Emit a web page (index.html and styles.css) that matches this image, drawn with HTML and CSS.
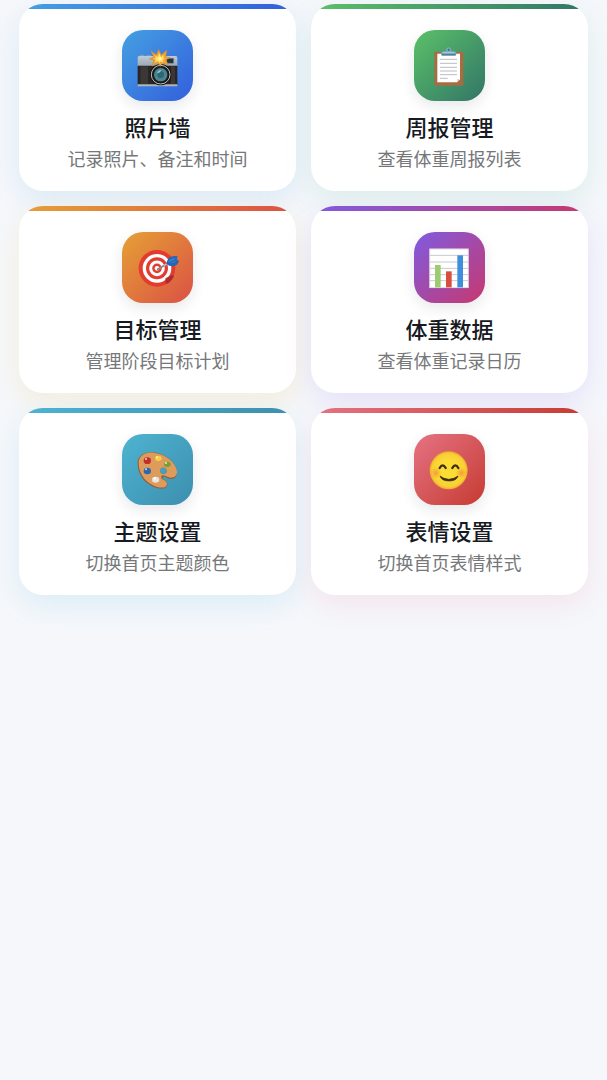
FILE: index.html
```html
<!DOCTYPE html>
<html lang="zh-CN">
<head>
<meta charset="utf-8">
<meta name="viewport" content="width=device-width, initial-scale=1">
<title>功能菜单</title>
<link rel="stylesheet" href="styles.css">
</head>
<body>
<main class="menu">
  <a class="card blue" href="#photos">
    <span class="icon"><svg class="glyph" viewBox="0 0 135 135" aria-hidden="true">
      <defs><linearGradient id="silver" x1="0" y1="0" x2="0" y2="1"><stop offset="0" stop-color="#bccbd6"/><stop offset="1" stop-color="#9aa9b3"/></linearGradient></defs>
      <path d="M14 39V35h14v4zM34 40V36h14v4z" fill="#6f9fc8"/>
      <path d="M12 39h110q5 0 5 5v25H8V44q0-5 4-5z" fill="url(#silver)"/>
      <path d="M8 68h119v58H8z" fill="#292626"/>
      <path d="M16 70h23v54H16zM108 70h12v54h-12z" fill="#3b3736"/>
      <path d="M8 124h119v6H8z" fill="#b0b6ba"/>
      <rect x="95" y="46" width="21" height="15" rx="2" fill="#26313a" stroke="#788791" stroke-width="2"/>
      <circle cx="77" cy="95" r="32" fill="#171616"/>
      <circle cx="77" cy="95" r="28" fill="none" stroke="#c9c0b4" stroke-width="3"/>
      <circle cx="77" cy="95" r="23" fill="#17272d"/>
      <circle cx="77" cy="95" r="20" fill="#4a8590"/>
      <circle cx="77" cy="95" r="10" fill="#2d6675"/>
      <path d="M66 91q3-10 13-10-3 9-13 10z" fill="#91c5ca"/>
      <path d="M71 20l8 16 16-14-3 19 13 3-13 6 7 15-17-6-6 11-8-12-17 11 6-18-14-3 14-6-9-18 16 12z" fill="#f2a534" stroke="#d08a32" stroke-width="2"/>
      <path d="M73 31l5 11 9-6-2 10 5 2-7 3 2 8-8-4-4 6-4-7-9 5 3-9-7-2 7-3-4-8 9 5z" fill="#ffdf65"/>
      <circle cx="75" cy="47" r="5" fill="#fff5b7"/>
    </svg></span>
    <h2 class="title">照片墙</h2>
    <p class="desc">记录照片、备注和时间</p>
  </a>
  <a class="card green" href="#reports">
    <span class="icon"><svg class="glyph" viewBox="0 0 135 135" aria-hidden="true">
      <rect x="22" y="26" width="87" height="102" rx="4" fill="#a96c40"/>
      <path d="M31 32h68v77l-9 9H31z" fill="#fff"/>
      <path d="M99 109H90v9z" fill="#cbd1da"/>
      <path d="M39 49h51M39 61h51M39 73h51M39 84h51M39 95h51M39 106h23" stroke="#969ba3" stroke-width="2"/>
      <path d="M42 34v-4q0-5 7-5h7q2-12 9-12t9 12h7q7 0 7 5v4q0 4-4 4H46q-4 0-4-4z" fill="#79a9c0"/>
      <path d="M44 33h42v4H44z" fill="#527f99"/>
      <path d="M48 27h34v3H48z" fill="#a4c9d8"/>
      <circle cx="65" cy="20" r="3" fill="#31705e"/>
    </svg></span>
    <h2 class="title">周报管理</h2>
    <p class="desc">查看体重周报列表</p>
  </a>
  <a class="card orange" href="#goals">
    <span class="icon"><svg class="glyph" viewBox="0 0 135 135" aria-hidden="true">
      <circle cx="66" cy="70" r="55" fill="#e33b2d"/>
      <circle cx="66" cy="70" r="38" fill="none" stroke="#fff" stroke-width="10"/>
      <circle cx="66" cy="70" r="19" fill="none" stroke="#fff" stroke-width="9"/>
      <circle cx="66" cy="70" r="7" fill="#fff"/>
      <path d="M91 100l20-10 6 3q-5 15-20 23l-5-3z" fill="#a82730" opacity=".85"/>
      <path d="M66 74L105 51" stroke="#b7bcc4" stroke-width="5"/>
      <path d="M66 74l21-12" stroke="#8c7780" stroke-width="4"/>
      <path d="M94 57q2-17 14-22 9-3 20-1l-3 9 7 5q-4 14-18 16-10 1-20-7z" fill="#2865b4"/>
      <path d="M98 54q4-11 15-13l9-3-3 6 7 3-9 5q-9 4-19 2z" fill="#3482cf"/>
      <path d="M97 56l27-12" stroke="#184c8d" stroke-width="2"/>
    </svg></span>
    <h2 class="title">目标管理</h2>
    <p class="desc">管理阶段目标计划</p>
  </a>
  <a class="card purple" href="#weight">
    <span class="icon"><svg class="glyph" viewBox="0 0 135 135" aria-hidden="true">
      <rect x="7" y="11" width="118" height="118" fill="#fff"/>
      <path d="M9 31h114M9 51h114M9 70h114M9 89h114M9 107h114" stroke="#c5cbd1" stroke-width="3"/>
      <path d="M8 12h116v116H8z" fill="none" stroke="#c5c4d2" stroke-width="2"/>
      <path d="M24 60h17v67H24z" fill="#9dcc70"/>
      <path d="M57 79h17v48H57z" fill="#d84f3e"/>
      <path d="M91 31h17v96H91z" fill="#3f8edc"/>
    </svg></span>
    <h2 class="title">体重数据</h2>
    <p class="desc">查看体重记录日历</p>
  </a>
  <a class="card teal" href="#theme">
    <span class="icon"><svg class="glyph" viewBox="0 0 135 135" aria-hidden="true">
      <path d="M8 51C6 28 27 13 55 16c37 4 67 29 71 59 1 13-7 21-18 21-9 0-15-8-22-7-5 1-3 8 4 11 10 4 10 20-2 24-20 4-47-8-62-26C15 85 8 68 8 51zM80 63c-8 4-6 16 3 18s15-5 12-12-10-9-15-6z" fill="#965d38" fill-rule="evenodd"/>
      <path d="M11 48C11 28 29 14 55 17c36 3 67 29 71 56 1 12-7 19-18 19-10 0-18-9-25-7-8 3-4 12 5 15 10 4 11 17 1 21-20 4-46-9-61-26C17 81 11 65 11 48zM80 63c-8 4-6 16 3 18s15-5 12-12-10-9-15-6z" fill="#dd9b5c" fill-rule="evenodd"/>
      <ellipse cx="37" cy="41" rx="11" ry="10" fill="#c52e29"/><circle cx="33" cy="36" r="3" fill="#ffd2ca"/>
      <ellipse cx="70" cy="34" rx="10" ry="8" fill="#f5cf3e"/><circle cx="66" cy="31" r="3" fill="#fff7bd"/>
      <ellipse cx="97" cy="52" rx="10" ry="8" fill="#759f36"/><circle cx="93" cy="48" r="3" fill="#e4f6a8"/>
      <ellipse cx="37" cy="72" rx="11" ry="10" fill="#2f66ae"/><circle cx="33" cy="67" r="3" fill="#bddcff"/>
      <ellipse cx="62" cy="98" rx="11" ry="9" fill="#e6e5e2"/><circle cx="59" cy="94" r="4" fill="#fff"/>
    </svg></span>
    <h2 class="title">主题设置</h2>
    <p class="desc">切换首页主题颜色</p>
  </a>
  <a class="card red" href="#emoji">
    <span class="icon"><svg class="glyph" viewBox="0 0 135 135" aria-hidden="true">
      <defs>
        <radialGradient id="face"><stop offset=".5" stop-color="#fbdc35"/><stop offset=".88" stop-color="#f8cf34"/><stop offset="1" stop-color="#eca72f"/></radialGradient>
        <radialGradient id="blush"><stop offset="0" stop-color="#ed7b39" stop-opacity=".6"/><stop offset="1" stop-color="#ed7b39" stop-opacity="0"/></radialGradient>
      </defs>
      <circle cx="65" cy="70" r="57" fill="url(#face)"/>
      <circle cx="27" cy="78" r="17" fill="url(#blush)"/><circle cx="103" cy="78" r="17" fill="url(#blush)"/>
      <path d="M38 63q9-16 18 0M76 63q9-16 18 0" fill="none" stroke="#3f2d14" stroke-width="7" stroke-linecap="round"/>
      <path d="M39 87q26 20 54 0-4 15-27 15T39 87z" fill="#3f2d14" stroke="#3f2d14" stroke-width="2" stroke-linejoin="round"/>
    </svg></span>
    <h2 class="title">表情设置</h2>
    <p class="desc">切换首页表情样式</p>
  </a>
</main>
</body>
</html>
```
FILE: styles.css
```css
* { box-sizing: border-box; }

body {
  margin: 0;
  min-height: 100vh;
  background: #f5f7fb;
  color: #171a22;
  font-family: "Noto Sans CJK SC", sans-serif;
}

.menu {
  display: grid;
  grid-template-columns: 1fr 1fr;
  gap: 15px;
  padding: 4px 19px 24px;
}

.card {
  display: flex;
  flex-direction: column;
  align-items: center;
  padding: 26px 12px 21px;
  border-radius: 24px;
  background: linear-gradient(90deg, var(--from), var(--to)) top / 100% 5px no-repeat, #fff;
  box-shadow: 0 10px 28px var(--glow);
  color: inherit;
  text-align: center;
  text-decoration: none;
}

.icon {
  display: flex;
  align-items: center;
  justify-content: center;
  width: 71px;
  height: 71px;
  border-radius: 21px;
  background: linear-gradient(135deg, var(--from), var(--to));
  box-shadow: 0 5px 14px rgba(20, 30, 50, 0.1);
}

.glyph {
  width: 45px;
  height: 45px;
}

.title {
  margin: 10px 0 0;
  font-size: 22px;
  font-weight: 500;
  line-height: 30px;
}

.desc {
  margin: 5px 0 0;
  color: #757779;
  font-size: 18px;
  font-weight: 400;
  line-height: 24px;
}

.blue { --from: #45a0e2; --to: #325fdc; --glow: rgba(70, 160, 220, 0.14); }
.green { --from: #5bc168; --to: #327568; --glow: rgba(70, 180, 130, 0.13); }
.orange { --from: #e5a136; --to: #db5144; --glow: rgba(245, 190, 70, 0.16); }
.purple { --from: #805be1; --to: #c7386f; --glow: rgba(125, 90, 235, 0.13); }
.teal { --from: #4db4d1; --to: #3d8eae; --glow: rgba(70, 185, 220, 0.14); }
.red { --from: #e57383; --to: #c63b32; --glow: rgba(240, 110, 140, 0.12); }
```
